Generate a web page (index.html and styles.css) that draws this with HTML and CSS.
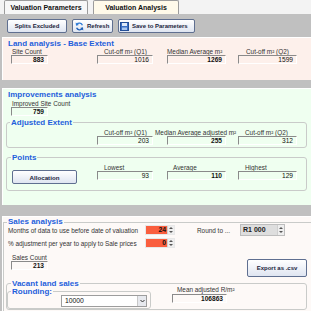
FILE: index.html
```html
<!DOCTYPE html>
<html>
<head>
<meta charset="utf-8">
<link rel="stylesheet" href="styles.css">
</head>
<body>
<div class="app">
  <div class="tabs">
    <div class="tab">Valuation Parameters</div>
    <div class="tab active">Valuation Analysis</div>
  </div>
  <div class="toolbar">
    <div class="btn w60">Splits Excluded</div>
    <div class="btn w41">
      <svg class="ico" width="9" height="9" viewBox="0 0 10 10"><path d="M8.2 3.6A3.6 3.6 0 0 0 2 2.6" stroke="#2f7bd6" stroke-width="1.5" fill="none"/><path d="M0.8 0.6L1.1 4.2L4.4 3.2Z" fill="#2f7bd6"/><path d="M1.8 6.4A3.6 3.6 0 0 0 8 7.4" stroke="#1d5fb8" stroke-width="1.5" fill="none"/><path d="M9.2 9.4L8.9 5.8L5.6 6.8Z" fill="#1d5fb8"/></svg>
      <span>Refresh</span>
    </div>
    <div class="btn w77">
      <svg class="ico" width="9" height="9" viewBox="0 0 9 9"><rect x="0.5" y="0.5" width="8" height="8" fill="#3a6fc4" stroke="#234e96"/><rect x="2" y="1" width="5" height="3" fill="#dfeaf8"/><rect x="2" y="5.5" width="5" height="2.5" fill="#a9c6ee"/></svg>
      <span>Save to Parameters</span>
    </div>
  </div>

  <section class="panel land">
    <div class="title">Land analysis - Base Extent</div>
    <div class="row">
      <div class="field w37 m8"><div class="lbl o1">Site Count</div><div class="box b">883</div></div>
      <div class="field w56 m49"><div class="lbl o7">Cut-off m² (Q1)</div><div class="box">1016</div></div>
      <div class="field w59 m14"><div class="lbl o0">Median Average m²</div><div class="box b">1269</div></div>
      <div class="field w59 m12"><div class="lbl o8">Cut-off m² (Q2)</div><div class="box">1599</div></div>
    </div>
  </section>

  <section class="panel impr">
    <div class="title">Improvements analysis</div>
    <div class="row mt1">
      <div class="field w37 m8"><div class="lbl o1">Improved Site Count</div><div class="box b">759</div></div>
    </div>
    <fieldset class="grp adj">
      <legend class="m3">Adjusted Extent</legend>
      <div class="row pt2">
        <div class="field w56 m90"><div class="lbl o7">Cut-off m² (Q1)</div><div class="box">203</div></div>
        <div class="field w59 m14"><div class="lbl wide">Median Average adjusted m²</div><div class="box b">255</div></div>
        <div class="field w59 m12"><div class="lbl o7">Cut-off m² (Q2)</div><div class="box">312</div></div>
      </div>
    </fieldset>
    <fieldset class="grp pts">
      <legend class="m4">Points</legend>
      <div class="row pt2">
        <div class="btn alloc m5">Allocation</div>
        <div class="field w56 m20"><div class="lbl o7">Lowest</div><div class="box">93</div></div>
        <div class="field w59 m14"><div class="lbl o6">Average</div><div class="box b">110</div></div>
        <div class="field w59 m12"><div class="lbl o7">Highest</div><div class="box">129</div></div>
      </div>
    </fieldset>
  </section>

  <section class="panel sales">
    <fieldset class="grp salesgrp">
      <legend class="m3 short">Sales analysis</legend>
      <div class="srow r1">
        <div class="slbl">Months of data to use before date of valuation</div>
        <div class="num red"><span class="nv">24</span><span class="spin"><i class="up"></i><i class="dn"></i></span></div>
        <div class="rlbl">Round to ...</div>
        <div class="num grey"><span class="nv left">R1 000</span><span class="spin"><i class="up"></i><i class="dn"></i></span></div>
      </div>
      <div class="srow r2">
        <div class="slbl">% adjustment per year to apply to Sale prices</div>
        <div class="num red"><span class="nv">0</span><span class="spin"><i class="up"></i><i class="dn"></i></span></div>
      </div>
      <div class="row r3">
        <div class="field w37 m7"><div class="lbl o1">Sales Count</div><div class="box b">213</div></div>
        <div class="btn export">Export as .csv</div>
      </div>
      <fieldset class="grp vacant">
        <legend class="m4 mid">Vacant land sales</legend>
        <div class="vrow">
          <fieldset class="grp rounding">
            <legend class="m3 mid">Rounding:</legend>
            <div class="select"><span class="sv">10000</span><span class="arrow"><svg width="5" height="4" viewBox="0 0 5 4"><path d="M0.5 1L2.5 3L4.5 1" stroke="#333" stroke-width="1" fill="none"/></svg></span></div>
          </fieldset>
          <div class="field w55 mean"><div class="lbl o5">Mean adjusted R/m²</div><div class="box b">106863</div></div>
        </div>
      </fieldset>
    </fieldset>
  </section>
</div>
</body>
</html>
```

FILE: styles.css
```css
* { box-sizing: border-box; }
html, body { margin: 0; padding: 0; }
body {
  width: 311px;
  height: 311px;
  overflow: hidden;
  font-family: "Liberation Sans", Arial, sans-serif;
  background: #c0c0c0;
  color: #2a2a2a;
}
.app {
  width: 311px;
  height: 311px;
  display: flex;
  flex-direction: column;
  background: #c0c0c0;
  overflow: hidden;
}

/* tabs */
.tabs {
  height: 14px;
  flex: none;
  display: flex;
  gap: 5px;
  padding-left: 4px;
  background: #f3f3f3;
}
.tab {
  width: 84px;
  height: 14px;
  border: 1px solid #9c9c9c;
  border-bottom: none;
  border-radius: 2px 2px 0 0;
  background: #f7f7f7;
  font-size: 7px;
  font-weight: bold;
  line-height: 13px;
  text-align: center;
  color: #111;
}
.tab.active { width: 86px; background: #fffaea; }

/* toolbar */
.toolbar {
  height: 23px;
  flex: none;
  display: flex;
  gap: 5px;
  padding: 5px 0 0 7px;
}
.btn {
  height: 14px;
  display: flex;
  align-items: center;
  justify-content: center;
  gap: 3px;
  border: 1px solid #5f6f90;
  border-radius: 2px;
  background: linear-gradient(#ffffff, #dfe5f1);
  font-size: 6px;
  font-weight: bold;
  color: #1b1d3c;
  white-space: nowrap;
  flex: none;
}
.w60 { width: 60px; }
.w41 { width: 41px; justify-content: flex-start; padding-left: 2px; }
.w77 { width: 77px; justify-content: flex-start; padding-left: 1px; }
.ico { flex: none; }

/* panels */
.panel {
  flex: none;
  margin-left: 2px;
  border-top: 1px solid #ffffff;
  border-left: 1px solid #ffffff;
}
.land { height: 43px; background: #fdf0eb; padding-top: 1px; }
.impr { height: 117px; margin-top: 8px; background: #effff0; padding-top: 1px; }
.sales { flex: 1; margin-top: 11px; background: #fdf9f7; padding-top: 1px; }

.title {
  font-size: 8px;
  font-weight: bold;
  line-height: 9px;
  color: #1f5fdc;
  padding-left: 5px;
  white-space: nowrap;
}

/* rows / fields */
.row { display: flex; align-items: flex-start; }
.mt1 { margin-top: 1px; }
.pt2 { padding-top: 2px; }
.field { display: flex; flex-direction: column; flex: none; }
.w37 { width: 37px; }
.w55 { width: 55px; }
.w56 { width: 56px; }
.w59 { width: 59px; }
.m5 { margin-left: 5px; }
.m7 { margin-left: 7px; }
.m8 { margin-left: 8px; }
.m12 { margin-left: 12px; }
.m14 { margin-left: 14px; }
.m20 { margin-left: 20px; }
.m49 { margin-left: 49px; }
.m90 { margin-left: 90px; }

.lbl {
  font-size: 6.4px;
  line-height: 7px;
  height: 7px;
  white-space: nowrap;
  color: #333;
}
.o0 { padding-left: 0; }
.o1 { padding-left: 1px; }
.o5 { padding-left: 5px; }
.o6 { padding-left: 6px; }
.o7 { padding-left: 7px; }
.o8 { padding-left: 8px; }
.wide { margin-left: -12px; }

.box {
  height: 9px;
  border-top: 1px solid #8a8a8a;
  border-left: 1px solid #8a8a8a;
  border-bottom: 1px solid #ffffff;
  border-right: 1px solid #ffffff;
  font-size: 6.6px;
  line-height: 7px;
  text-align: right;
  padding-right: 3px;
  color: #111;
}
.box.b { font-weight: bold; }

/* group boxes */
fieldset.grp {
  margin: 0;
  padding: 0;
  min-width: 0;
  border: 1px solid #c9cbc9;
  border-radius: 3px;
}
fieldset.grp > legend {
  padding: 0 1px;
  font-size: 8px;
  font-weight: bold;
  line-height: 9px;
  color: #1f5fdc;
  white-space: nowrap;
}
fieldset.grp > legend.m3 { margin-left: 3px; }
fieldset.grp > legend.m4 { margin-left: 4px; }
fieldset.grp > legend.short { line-height: 6px; height: 6px; }
fieldset.grp > legend.mid { line-height: 7px; height: 7px; }

.adj { width: 301px; margin: 2px 0 0 3px !important; padding-bottom: 2px !important; }
.pts { width: 301px; margin: 5px 0 0 3px !important; padding-bottom: 6px !important; }
.alloc {
  width: 65px;
  margin-top: 6px;
  font-size: 6.2px;
}

/* sales */
.salesgrp {
  margin-top: 1px !important;
  height: 100%;
  border-right: none !important;
  border-bottom: none !important;
  border-radius: 0 !important;
}
.srow { display: flex; align-items: center; height: 12px; }
.r1 { margin-top: -1px; }
.r2 { margin-top: 1px; }
.slbl {
  width: 141px;
  padding-left: 4px;
  font-size: 6.4px;
  line-height: 7px;
  white-space: nowrap;
  color: #333;
  flex: none;
}
.num {
  height: 10px;
  width: 30px;
  display: flex;
  flex: none;
  border: 1px solid #c0c0c0;
}
.num.red { background: #fa5e3e; border-color: #e8e8e8; }
.num.grey { width: 45px; height: 12px; background: #dedede; border-color: #bdbdbd; }
.nv {
  flex: 1;
  text-align: right;
  font-size: 6.8px;
  font-weight: bold;
  line-height: 8px;
  padding-right: 1px;
  color: #111;
}
.num.grey .nv { text-align: left; padding-left: 2px; line-height: 10px; font-size: 7px; color: #222; }
.spin {
  width: 7px;
  flex: none;
  background: #eeeeee;
  border-left: 1px solid #cfcfcf;
  display: flex;
  flex-direction: column;
  align-items: center;
  justify-content: space-evenly;
}
.spin i { display: block; width: 0; height: 0; border-left: 2px solid transparent; border-right: 2px solid transparent; }
.spin .up { border-bottom: 2px solid #555; }
.spin .dn { border-top: 2px solid #555; }
.rlbl {
  margin-left: 22px;
  width: 43px;
  font-size: 6.4px;
  line-height: 7px;
  white-space: nowrap;
  color: #333;
  flex: none;
}
.r3 { margin-top: 5px; }
.export {
  width: 60px;
  height: 18px;
  margin-left: 199px;
  margin-top: 5px;
}

.vacant {
  width: 301px;
  margin: 3px 0 0 2px !important;
}
.vrow { display: flex; align-items: flex-start; margin-top: 1px; }
.rounding { width: 144px; padding-bottom: 1px !important; }
.select {
  width: 86px;
  height: 12px;
  margin-left: 53px;
  display: flex;
  border: 1px solid #9d9d9d;
  background: #ffffff;
}
.sv { flex: 1; font-size: 6.8px; line-height: 10px; padding-left: 3px; color: #111; }
.arrow {
  width: 9px;
  flex: none;
  display: flex;
  align-items: center;
  justify-content: center;
  background: #e7e9ee;
  border-left: 1px solid #c8c8c8;
}
.mean { margin-left: 21px; margin-top: -2px; }
.mean .box { margin-top: 1px; }
```
